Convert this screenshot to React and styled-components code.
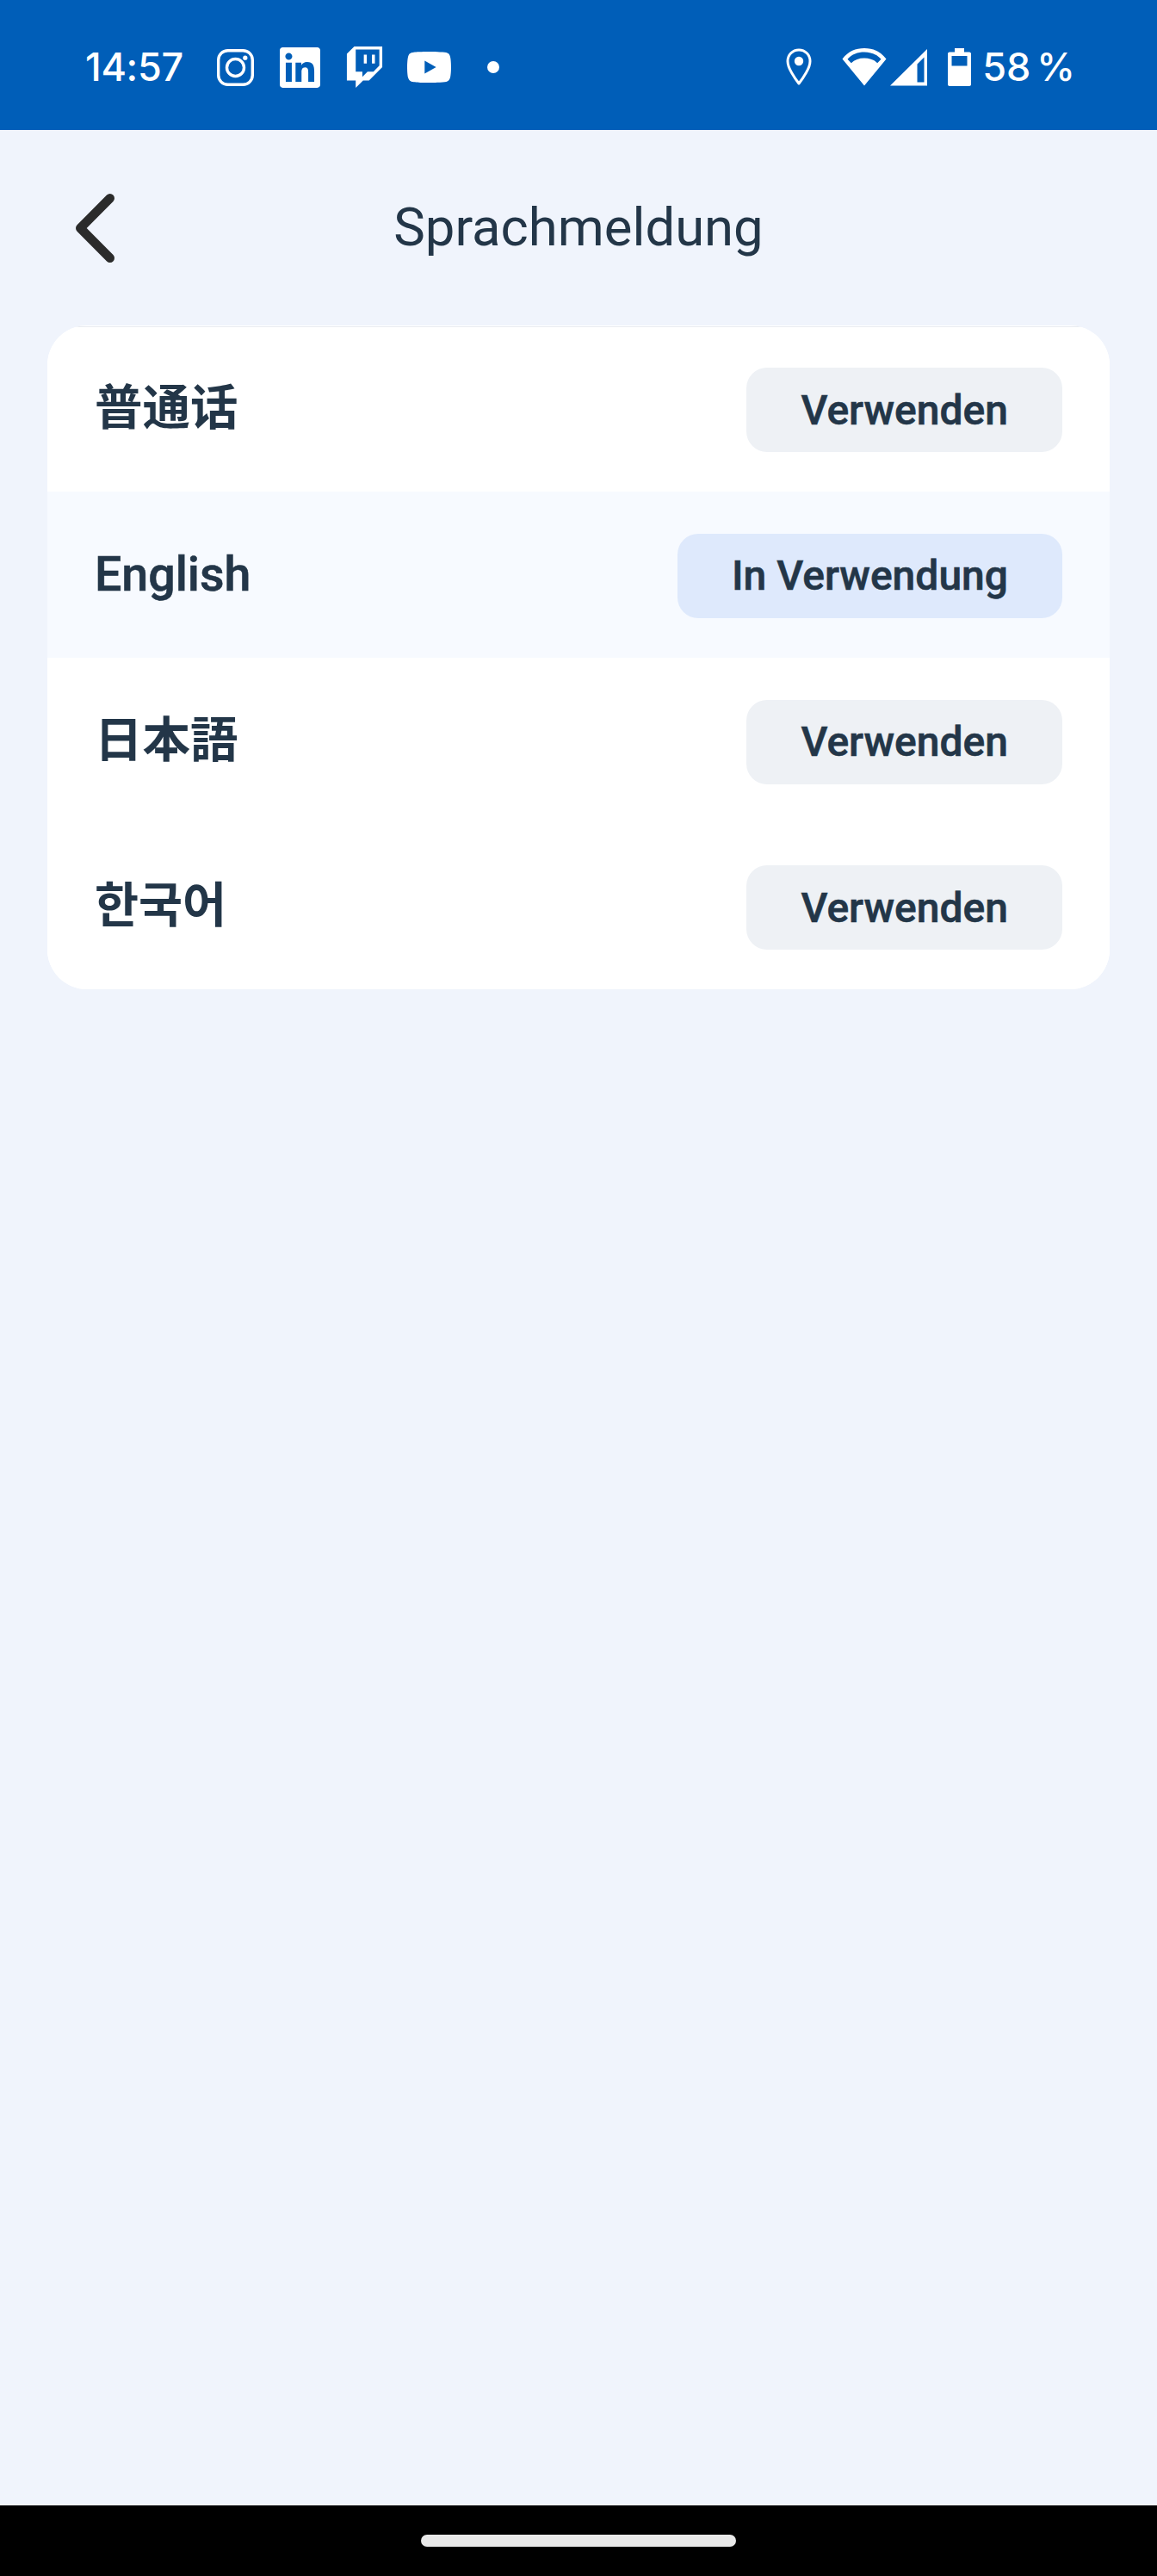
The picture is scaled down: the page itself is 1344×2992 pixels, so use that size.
import React from "react";
import styled, { createGlobalStyle } from "styled-components";
import { SiLinkedin, SiYoutube } from "react-icons/si";

const Global = createGlobalStyle`
  html, body { margin: 0; padding: 0; background: #000; }
  #root { width: 1344px; height: 2992px; }
  * { box-sizing: border-box; }
`;

const Screen = styled.div`
  width: 1344px;
  height: 2992px;
  display: flex;
  flex-direction: column;
  overflow: hidden;
  background: #f0f4fc;
  font-family: Roboto, "Noto Sans CJK SC", sans-serif;
  color: #233648;
`;

const StatusBar = styled.div`
  height: 151px;
  flex: none;
  background: #005eb8;
  color: #fff;
  display: flex;
  justify-content: space-between;
  align-items: flex-start;
  padding: 54px 95px 0 99px;
`;

const StatusGroup = styled.div`
  display: flex;
  align-items: center;
  height: 48px;
`;

const Clock = styled.span`
  font-family: Inter, sans-serif;
  font-size: 45px;
  font-weight: 500;
  letter-spacing: -0.3px;
  line-height: 48px;
  width: 153px;
`;

const Slot = styled.span`
  display: flex;
  align-items: center;
  justify-content: center;
  flex: none;
  width: ${(p) => p.$w}px;
  margin-right: ${(p) => p.$gap || 0}px;
`;

const Dot = styled.span`
  width: 14px;
  height: 14px;
  border-radius: 50%;
  background: #fff;
  margin-left: 42px;
`;

const Battery = styled.span`
  font-family: Inter, sans-serif;
  font-size: 45px;
  font-weight: 500;
  word-spacing: -5px;
  line-height: 48px;
  margin-left: 13px;
  white-space: nowrap;
`;

const Header = styled.header`
  height: 227px;
  flex: none;
  display: grid;
  grid-template-columns: 1fr auto 1fr;
  align-items: start;
  padding: 74px 0 0 88px;
`;

const BackButton = styled.button`
  width: 46px;
  height: 80px;
  padding: 0;
  border: 0;
  background: none;
  display: block;
`;

const Title = styled.h1`
  margin: 2px 88px 0 0;
  font-size: 61.6px;
  line-height: 74px;
  font-weight: 400;
  color: #233648;
`;

const Card = styled.section`
  margin: 0 55px;
  background: #fff;
  border-radius: 46px;
  overflow: hidden;
  display: flex;
  flex-direction: column;
`;

const Row = styled.div`
  height: 192.8px;
  flex: none;
  display: flex;
  align-items: flex-start;
  justify-content: space-between;
  padding: 48.6px 55px 0;
  background: ${(p) => (p.$active ? "#f7faff" : "#fff")};
  &:first-child {
    height: 193.3px;
    padding-top: 49.1px;
    box-shadow: inset 0 1px 0 #fff, inset 0 2px 0 #e9ecf1;
  }
  &:last-child {
    height: 192px;
  }
`;

const labelFonts = {
  zh: '"Noto Sans CJK SC"',
  ja: '"Noto Sans CJK JP"',
  ko: '"Noto Sans CJK KR"',
};

const Label = styled.span`
  font-family: ${(p) => labelFonts[p.lang] || "Roboto"}, sans-serif;
  font-size: 55.5px;
  font-weight: ${(p) => (p.lang ? 700 : 500)};
  line-height: 74px;
  margin-top: ${(p) => (p.lang ? 5 : 11)}px;
  -webkit-text-stroke: ${(p) => (p.lang ? "0" : "0.6px")};
`;

const UseButton = styled.button`
  height: 98px;
  padding: 0 63px;
  border: 0;
  border-radius: 24px;
  font-family: inherit;
  font-size: 48px;
  font-weight: 500;
  -webkit-text-stroke: 0.6px;
  color: #233648;
  background: ${(p) => (p.$active ? "#dee9fc" : "#eef1f5")};
`;

const Spacer = styled.div`
  flex: 1;
`;

const NavBar = styled.div`
  height: 82px;
  flex: none;
  background: #000;
  display: flex;
  justify-content: center;
  padding-top: 34px;
`;

const HomePill = styled.div`
  width: 366px;
  height: 14px;
  border-radius: 7px;
  background: #e9e9e9;
`;

const Instagram = () => (
  <svg width="43" height="43" viewBox="0 0 43 43" fill="none" stroke="#fff" strokeWidth="3.4">
    <rect x="1.7" y="1.7" width="39.6" height="39.6" rx="11" />
    <circle cx="21.5" cy="21.5" r="10" />
    <circle cx="32.8" cy="10.2" r="2.6" fill="#fff" stroke="none" />
  </svg>
);

const Twitch = () => (
  <svg width="43" height="48" viewBox="1.714 0 20.572 24" fill="#fff">
    <path d="M11.571 4.714h1.715v5.143H11.57zm4.715 0H18v5.143h-1.714zM6 0L1.714 4.286v15.428h5.143V24l4.286-4.286h3.428L22.286 12V0zm14.571 11.143l-3.428 3.428h-3.429l-3 3v-3H6.857V1.714h13.714Z" />
  </svg>
);

const Pin = () => (
  <svg width="30" height="44" viewBox="0 0 30 44">
    <path
      d="M15 2C7.6 2 2 7.8 2 15c0 4.6 2.2 9.4 4.6 13.4C9 32.6 12.4 37.6 15 41c2.6-3.4 6-8.4 8.4-12.6C25.8 24.4 28 19.6 28 15 28 7.8 22.4 2 15 2z"
      fill="none"
      stroke="#fff"
      strokeWidth="3"
      strokeLinejoin="round"
    />
    <circle cx="15" cy="15" r="5.2" fill="#fff" />
  </svg>
);

const Wifi = () => (
  <svg width="52" height="44" viewBox="0 0 52 44">
    <path
      d="M26 0C16 0 7.5 3.4 0.5 12.5L26 43.5L51.5 12.5C44.5 3.4 36 0 26 0zM26 4.5C33.5 4.5 40.5 7 45.5 12.8L41.2 17.2C37.5 13.5 32 11.5 26 11.5C20 11.5 14.5 13.5 10.8 17.2L6.5 12.8C11.5 7 18.5 4.5 26 4.5z"
      fill="#fff"
      fillRule="evenodd"
    />
  </svg>
);

const Signal = () => (
  <svg width="43" height="44" viewBox="0 0 43 44">
    <path d="M43 1V43.5H0zM39.5 10.5L31.5 18.5V39.5H39.5z" fill="#fff" fillRule="evenodd" />
  </svg>
);

const BatteryIcon = () => (
  <svg width="27" height="44" viewBox="0 0 27 44">
    <path
      d="M8 0H19V4.5H25C26.1 4.5 27 5.4 27 6.5V42C27 43.1 26.1 44 25 44H2C0.9 44 0 43.1 0 42V6.5C0 5.4 0.9 4.5 2 4.5H8zM4.5 9V20.5H22.5V9z"
      fill="#fff"
      fillRule="evenodd"
    />
  </svg>
);

const Chevron = () => (
  <svg width="46" height="80" viewBox="0 0 46 80" fill="none" stroke="#2b2b2b" strokeWidth="10.5" strokeLinecap="round" strokeLinejoin="round">
    <path d="M39.75 5.25L5.25 40L39.75 74.75" />
  </svg>
);

const languages = [
  { name: "普通话", action: "Verwenden", lang: "zh" },
  { name: "English", action: "In Verwendung", active: true },
  { name: "日本語", action: "Verwenden", lang: "ja" },
  { name: "한국어", action: "Verwenden", lang: "ko" },
];

export default function App() {
  return (
    <Screen>
      <Global />
      <StatusBar>
        <StatusGroup>
          <Clock>14:57</Clock>
          <Slot $w={43} $gap={30}><Instagram /></Slot>
          <Slot $w={47} $gap={30}><SiLinkedin size={47} color="#fff" /></Slot>
          <Slot $w={43} $gap={28}><Twitch /></Slot>
          <Slot $w={51}><SiYoutube size={52} color="#fff" /></Slot>
          <Dot />
        </StatusGroup>
        <StatusGroup>
          <Slot $w={30} $gap={35}><Pin /></Slot>
          <Slot $w={52} $gap={4}><Wifi /></Slot>
          <Slot $w={43} $gap={24}><Signal /></Slot>
          <Slot $w={27}><BatteryIcon /></Slot>
          <Battery>58 %</Battery>
        </StatusGroup>
      </StatusBar>
      <Header>
        <BackButton aria-label="Zurück"><Chevron /></BackButton>
        <Title>Sprachmeldung</Title>
      </Header>
      <Card>
        {languages.map((l) => (
          <Row key={l.name} $active={l.active}>
            <Label lang={l.lang}>{l.name}</Label>
            <UseButton $active={l.active}>{l.action}</UseButton>
          </Row>
        ))}
      </Card>
      <Spacer />
      <NavBar><HomePill /></NavBar>
    </Screen>
  );
}
